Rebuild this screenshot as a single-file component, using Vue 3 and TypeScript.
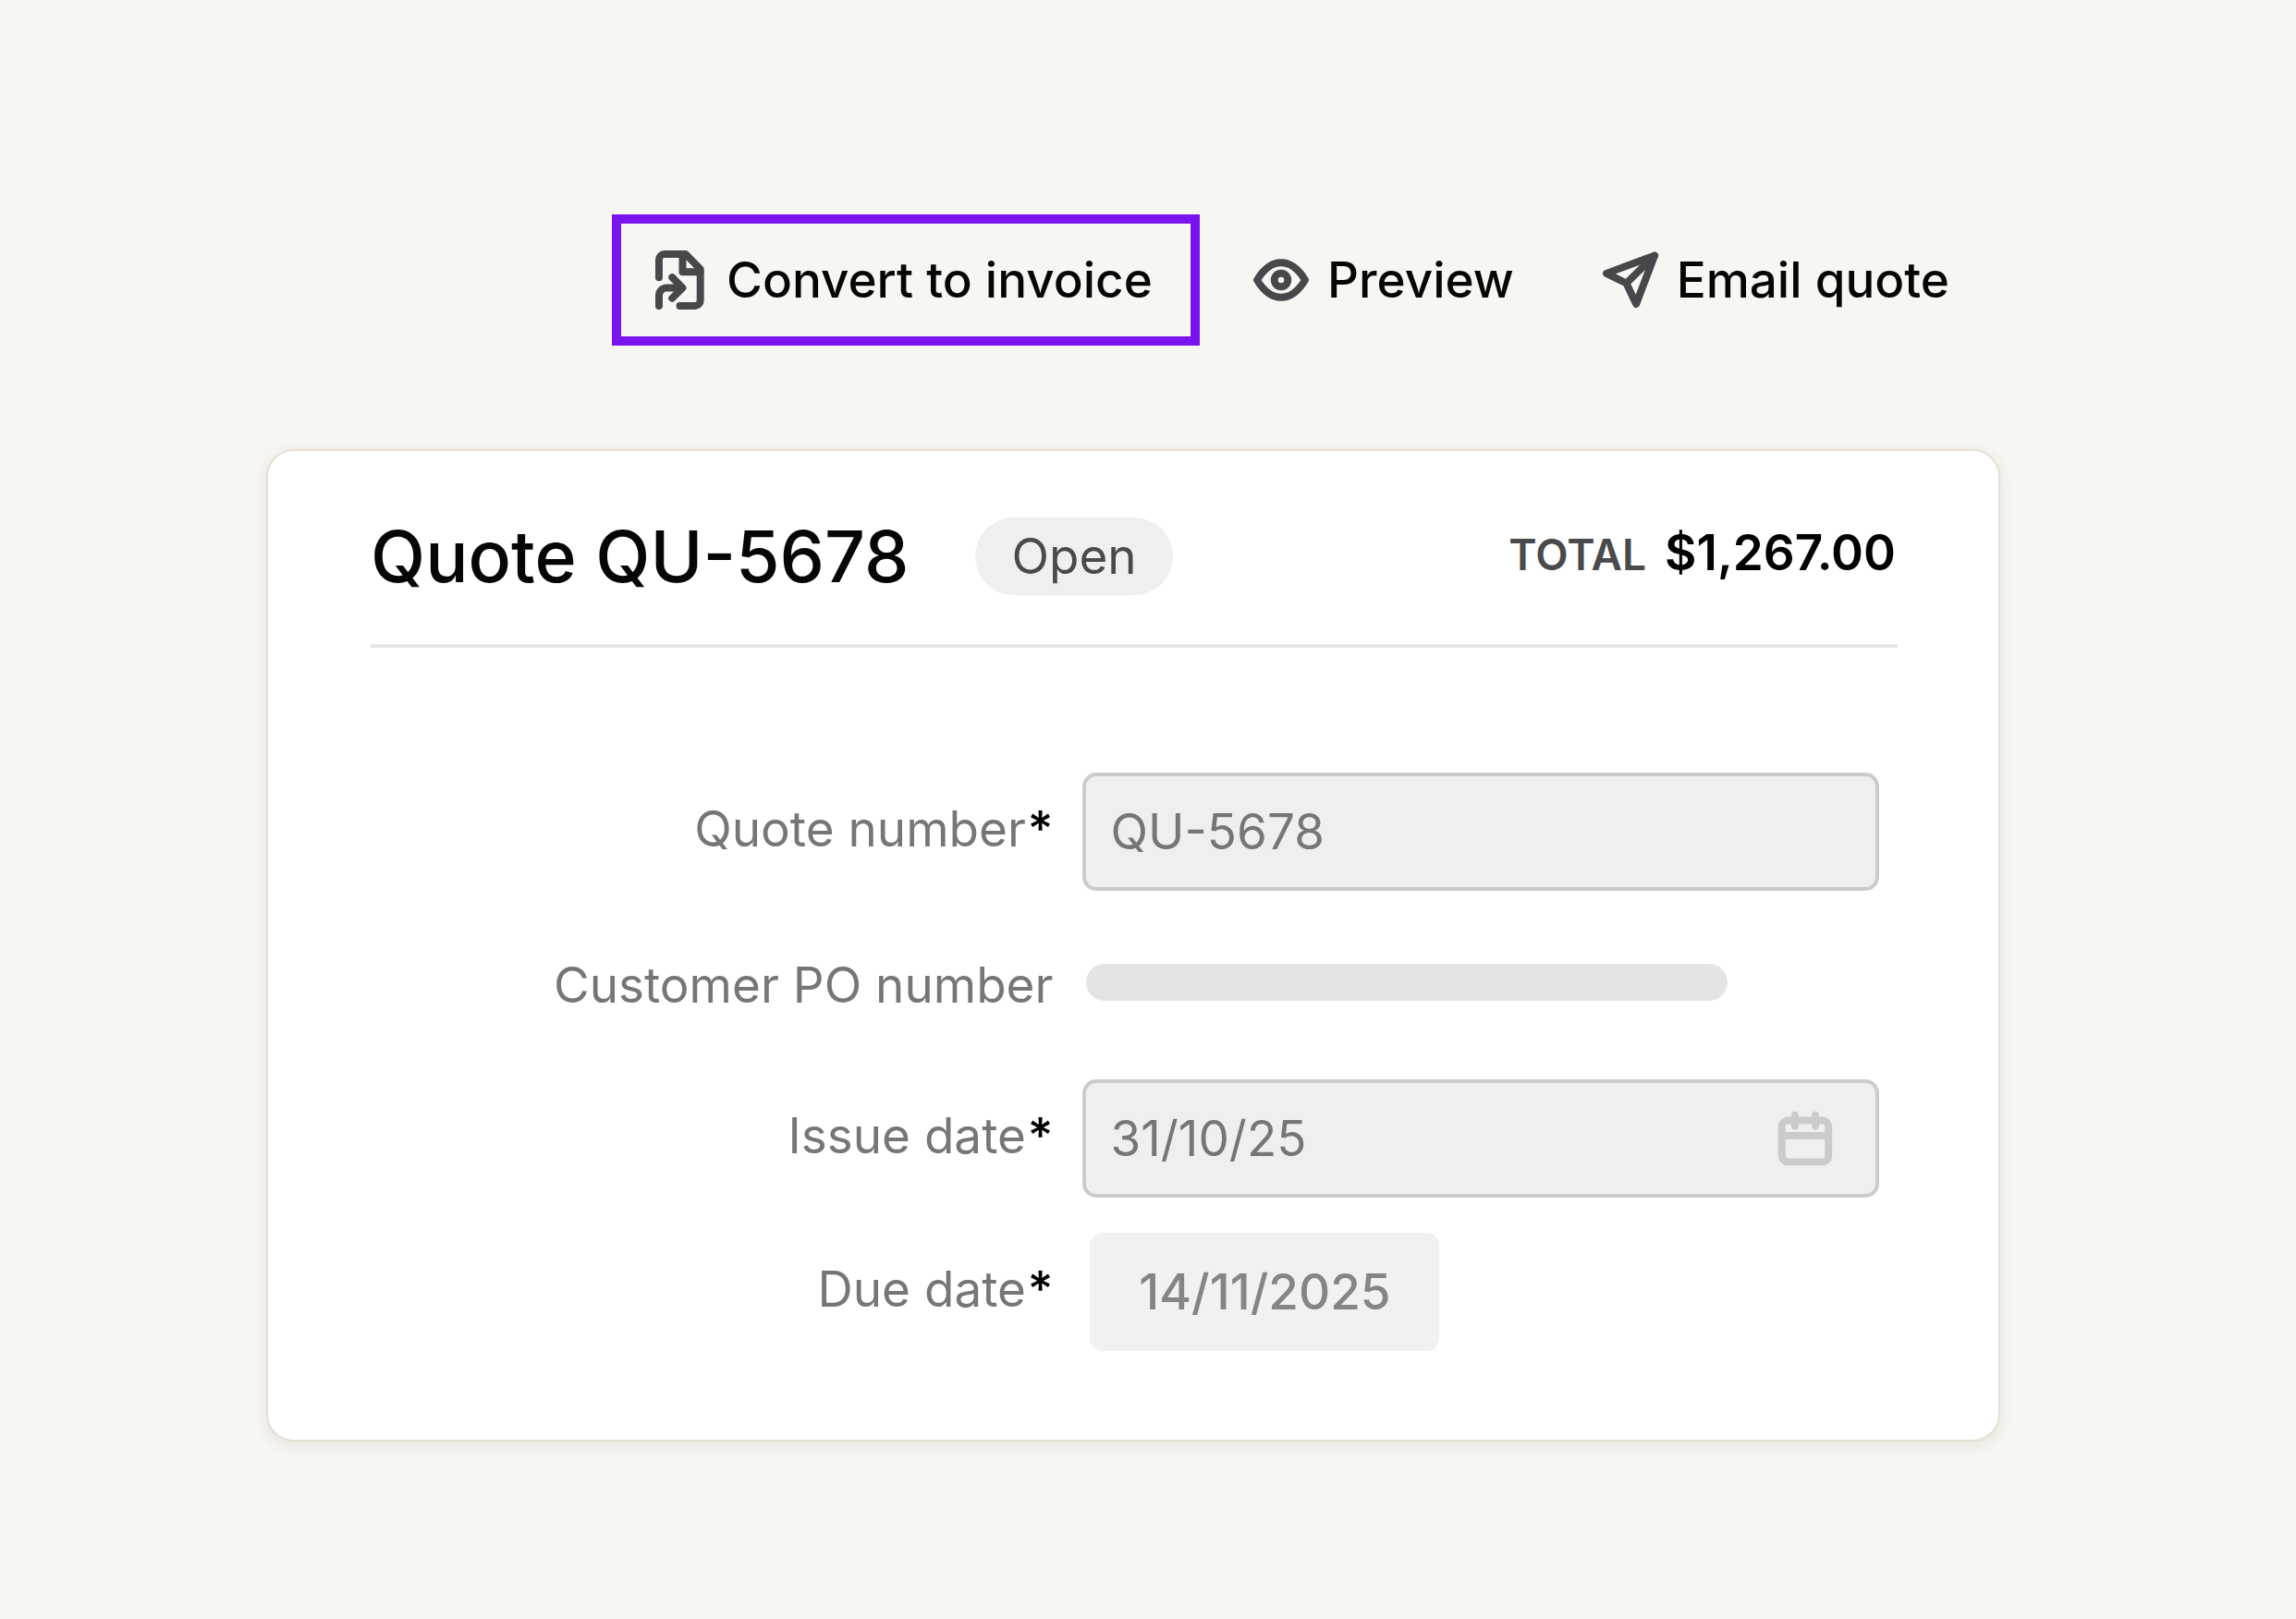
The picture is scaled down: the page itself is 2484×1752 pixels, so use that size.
<script setup lang="ts">
import { ref } from 'vue'

const quoteNumber = ref<string>('QU-5678')
const issueDate = ref<string>('31/10/25')
const dueDate = ref<string>('14/11/2025')
const total = ref<string>('$1,267.00')
</script>

<template>
  <main class="page">
    <nav class="actions" aria-label="Quote actions">
      <button type="button" class="action action--highlight">
        <svg class="icon-convert" viewBox="58 45 160 193" aria-hidden="true">
          <path d="M70 133V75a18 18 0 0 1 18-18H157L205 106V208a18 18 0 0 1-18 18H138" />
          <path d="M147 57V115H205" />
          <path d="M70 226V192a25 25 0 0 1 25-25H145" />
          <path d="M113 133L147 167L113 201" />
        </svg>
        <span>Convert to invoice</span>
      </button>
      <button type="button" class="action action--preview">
        <svg class="icon-eye" viewBox="48 57 182 138" aria-hidden="true">
          <path d="M60 126C80 93 106 69 139 69S198 93 218 126C198 159 172 183 139 183S80 159 60 126Z" />
          <circle cx="139" cy="126" r="22" />
        </svg>
        <span>Preview</span>
      </button>
      <button type="button" class="action action--email">
        <svg class="icon-send" viewBox="45 36 181 181" aria-hidden="true">
          <path d="M214 47L57 105L122 137L154 205Z" />
          <path d="M214 47L122 137" />
        </svg>
        <span>Email quote</span>
      </button>
    </nav>

    <section class="card">
      <header class="card-header">
        <h1 class="title">Quote {{ quoteNumber }}</h1>
        <span class="status">Open</span>
        <p class="total">
          <span class="total-label">TOTAL</span>
          <strong class="total-value">{{ total }}</strong>
        </p>
      </header>

      <form class="form" @submit.prevent>
        <div class="row">
          <label class="label label--required" for="quote-number">Quote number<span class="star">*</span></label>
          <div class="field">
            <input id="quote-number" v-model="quoteNumber" class="field-input" type="text" readonly />
          </div>
        </div>
        <div class="row">
          <span class="label">Customer PO number</span>
          <div class="placeholder"></div>
        </div>
        <div class="row">
          <label class="label label--required" for="issue-date">Issue date<span class="star">*</span></label>
          <div class="field">
            <input id="issue-date" v-model="issueDate" class="field-input" type="text" readonly />
            <svg class="icon-calendar" viewBox="371 186 175 176" aria-hidden="true">
              <rect x="382" y="215" width="153" height="136" rx="20" />
              <path d="M382 265H535M425 197V233M492 197V233" />
            </svg>
          </div>
        </div>
        <div class="row">
          <label class="label label--required" for="due-date">Due date<span class="star">*</span></label>
          <input id="due-date" v-model="dueDate" class="chip" type="text" readonly />
        </div>
      </form>
    </section>
  </main>
</template>

<style>
body {
  background: #f7f6f2;
}
</style>

<style scoped>
.page {
  box-sizing: border-box;
  min-height: 100vh;
  padding: 232px 320px 192px 288px;
  font-family: Inter, "Liberation Sans", sans-serif;
  font-size: 53px;
  line-height: 64px;
  color: #060606;
}

.actions {
  display: flex;
  justify-content: flex-end;
  align-items: center;
  margin-right: 55px;
}

.action {
  display: flex;
  align-items: center;
  gap: 20px;
  padding: 0;
  border: 0;
  background: none;
  color: inherit;
  font: inherit;
  font-weight: 500;
  white-space: nowrap;
  cursor: pointer;
}

.action--highlight {
  box-sizing: border-box;
  min-width: 636px;
  gap: 24px;
  padding: 29px 28px 29px 37px;
  border: 10px solid #7a14ef;
}

.action--preview {
  margin-left: 58px;
}

.action--email {
  margin-left: 96px;
}

svg {
  flex: none;
  overflow: visible;
  fill: none;
  stroke: #48484b;
  stroke-width: 24;
  stroke-linecap: round;
  stroke-linejoin: round;
}

.icon-convert {
  width: 53px;
  height: 64px;
}

.icon-eye {
  width: 60px;
  height: 46px;
}

.icon-send {
  width: 60px;
  height: 60px;
}

.icon-calendar {
  width: 58px;
  height: 58px;
  stroke: #cbcbcb;
  stroke-width: 24;
}

.card {
  margin-top: 112px;
  padding: 72px 109px 96px 111px;
  border: 2px solid #e6dfd1;
  border-radius: 30px;
  background: #fff;
  box-shadow: 0 4px 16px rgba(60, 60, 30, 0.1);
}

.card-header {
  display: flex;
  align-items: center;
  padding-bottom: 53px;
  border-bottom: 4px solid #e5e5e5;
}

.title {
  margin: 0;
  font-size: 77px;
  font-weight: 500;
  line-height: 84px;
}

.status {
  margin-left: 72px;
  padding: 10px 39px;
  border-radius: 42px;
  background: #efefef;
  color: #4a4a4c;
}

.total {
  display: flex;
  align-items: baseline;
  gap: 20px;
  margin: 0 2px 6px auto;
  white-space: nowrap;
}

.total-label {
  color: #4a4a4c;
  font-size: 46px;
  font-weight: 600;
}

.total-value {
  color: #000;
  font-weight: 600;
}

.form {
  display: grid;
  gap: 38px;
  padding: 135px 20px 0 0;
}

.row {
  display: grid;
  grid-template-columns: 6fr 7fr;
  column-gap: 32px;
  align-items: center;
  min-height: 128px;
}

.label {
  color: #757678;
  text-align: right;
}

.label--required {
  padding-bottom: 6px;
}

.star {
  margin-left: 2px;
  color: #000;
  font-weight: 500;
}

.field {
  display: flex;
  align-items: center;
  box-sizing: border-box;
  min-width: 0;
  height: 128px;
  padding: 0 47px 0 26px;
  border: 4px solid #cbcbcb;
  border-radius: 15px;
  background: #efefef;
}

.field-input {
  flex: 1;
  min-width: 0;
  padding: 0;
  border: 0;
  outline: 0;
  background: none;
  color: #757678;
  font: inherit;
}

.placeholder {
  width: 694px;
  max-width: 100%;
  height: 40px;
  margin: 0 0 6px 4px;
  border-radius: 20px;
  background: #e4e4e4;
}

.chip {
  box-sizing: border-box;
  width: 378px;
  height: 128px;
  margin-left: 8px;
  padding: 0;
  border: 0;
  border-radius: 14px;
  outline: 0;
  background: #f1f1f1;
  color: #858585;
  font: inherit;
  font-weight: 500;
  text-align: center;
}
</style>
